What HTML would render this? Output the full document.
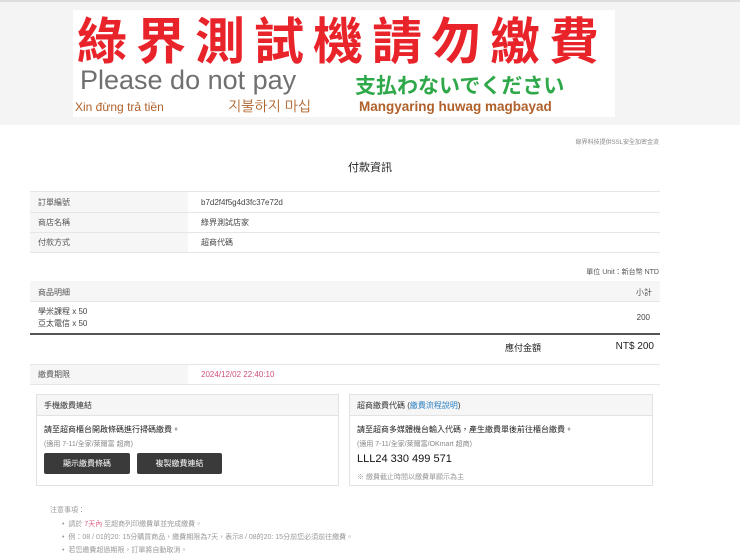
<!DOCTYPE html>
<html><head><meta charset="utf-8"><style>
*{margin:0;padding:0;box-sizing:border-box}
body{width:740px;height:547px;overflow:hidden;background:#fff;font-family:"Liberation Sans","Noto Sans CJK TC",sans-serif;font-size:8px;color:#333;position:relative}
.a{position:absolute}
.top{left:0;top:0;width:740px;height:125px;background:#f4f4f4;border-top:2px solid #ddd}
.ban{left:73px;top:10px;width:542px;height:107px;background:#fff}
.row{position:absolute;left:30px;width:630px;border-bottom:1px solid #e6e6e6;font-size:8px}
.row .l{position:absolute;left:0;top:0;bottom:0;width:158px;background:#f6f6f6;padding-left:8px;display:flex;align-items:center;color:#555}
.row .v{position:absolute;left:171px;top:0;bottom:0;display:flex;align-items:center;color:#444}
.box{position:absolute;top:394px;height:92px;border:1px solid #e2e2e2;background:#fff}
.bh{height:21px;background:#f6f6f6;border-bottom:1px solid #e2e2e2;padding-left:7px;line-height:21px;font-size:8px;color:#333}
.btn{position:absolute;top:58px;height:21px;background:#3a3a3a;color:#fff;border-radius:2px;font-size:8px;text-align:center;line-height:21px}
</style></head><body>
<div class="a top"></div>
<div class="a ban">
<div class="a" style="left:4px;top:0px;font-size:50px;line-height:56px;color:#e8232a;font-weight:bold;font-family:'Noto Sans CJK TC',sans-serif;letter-spacing:9px;white-space:nowrap">綠界測試機請勿繳費</div>
<div class="a" style="left:7px;top:55px;font-size:27px;color:#707070;white-space:nowrap">Please do not pay</div>
<div class="a" style="left:282px;top:60px;font-size:21px;color:#2fa84a;font-weight:bold;white-space:nowrap;font-family:'Noto Sans CJK JP',sans-serif">支払わないでください</div>
<div class="a" style="left:2px;top:90px;font-size:12px;color:#b0602a;white-space:nowrap">Xin đừng trả tiền</div>
<div class="a" style="left:155px;top:88px;font-size:14px;color:#b0602a;white-space:nowrap;font-family:'NanumGothic',sans-serif">지불하지 마십</div>
<div class="a" style="left:286px;top:89px;font-size:13.5px;color:#b0602a;font-weight:bold;white-space:nowrap">Mangyaring huwag magbayad</div>
</div>
<div class="a" style="right:81px;top:137px;font-size:6px;color:#888">綠界科技提供SSL安全加密金流</div>
<div class="a" style="left:0;width:740px;text-align:center;top:159px;font-size:11px;color:#222">付款資訊</div>
<div class="row" style="top:191px;height:22px;border-top:1px solid #e6e6e6"><div class="l">訂單編號</div><div class="v">b7d2f4f5g4d3fc37e72d</div></div>
<div class="row" style="top:213px;height:20px"><div class="l">商店名稱</div><div class="v">綠界測試店家</div></div>
<div class="row" style="top:233px;height:20px"><div class="l">付款方式</div><div class="v">超商代碼</div></div>
<div class="a" style="right:81px;top:267px;font-size:7px;color:#555">單位 Unit：新台幣 NTD</div>
<div class="a" style="left:30px;top:281px;width:630px;height:21px;background:#f6f6f6;border-bottom:1px solid #e6e6e6"><span class="a" style="left:8px;top:6px;color:#555">商品明細</span><span class="a" style="right:8px;top:6px;color:#555">小計</span></div>
<div class="a" style="left:38px;top:306px;line-height:12px;color:#444">學米課程 x 50<br>亞太電信 x 50</div>
<div class="a" style="right:90px;top:313px;color:#444">200</div>
<div class="a" style="left:30px;top:333px;width:630px;height:2px;background:#555"></div>
<div class="a" style="left:505px;top:341px;font-size:9px;color:#222">應付金額</div>
<div class="a" style="right:86px;top:341px;font-size:10px;color:#222">NT$ 200</div>
<div class="row" style="top:364px;height:21px;border-top:1px solid #e6e6e6"><div class="l">繳費期限</div><div class="v" style="color:#d0507a">2024/12/02 22:40:10</div></div>
<div class="box" style="left:36px;width:303px"><div class="bh">手機繳費連結</div>
<div class="a" style="left:7px;top:29px;color:#222">請至超商櫃台開啟條碼進行掃碼繳費。</div>
<div class="a" style="left:7px;top:44px;color:#888;font-size:7px">(適用 7-11/全家/萊爾富 超商)</div>
<div class="btn" style="left:7px;width:86px">顯示繳費條碼</div>
<div class="btn" style="left:100px;width:85px">複製繳費連結</div></div>
<div class="box" style="left:349px;width:304px"><div class="bh">超商繳費代碼 (<span style="color:#2a7fc0">繳費流程說明</span>)</div>
<div class="a" style="left:7px;top:29px;color:#222">請至超商多媒體機台輸入代碼，產生繳費單後前往櫃台繳費。</div>
<div class="a" style="left:7px;top:44px;color:#888;font-size:7px">(適用 7-11/全家/萊爾富/OKmart 超商)</div>
<div class="a" style="left:7px;top:58px;font-size:11px;color:#111">LLL24 330 499 571</div>
<div class="a" style="left:7px;top:77px;color:#999;font-size:7px">※ 繳費截止時間以繳費單顯示為主</div></div>
<div class="a" style="left:50px;top:505px;color:#999;font-size:7px">注意事項：</div>
<div class="a" style="left:62px;top:519px;color:#999;font-size:7px">• &nbsp;請於 <span style="color:#e06080">7天內</span> 至超商列印繳費單並完成繳費。</div>
<div class="a" style="left:62px;top:532px;color:#999;font-size:7px">• &nbsp;例：08 / 01的20: 15分購買商品，繳費期限為7天，表示8 / 08的20: 15分前您必須前往繳費。</div>
<div class="a" style="left:62px;top:545px;color:#999;font-size:7px">• &nbsp;若您繳費超過期限，訂單將自動取消。</div>
</body></html>
